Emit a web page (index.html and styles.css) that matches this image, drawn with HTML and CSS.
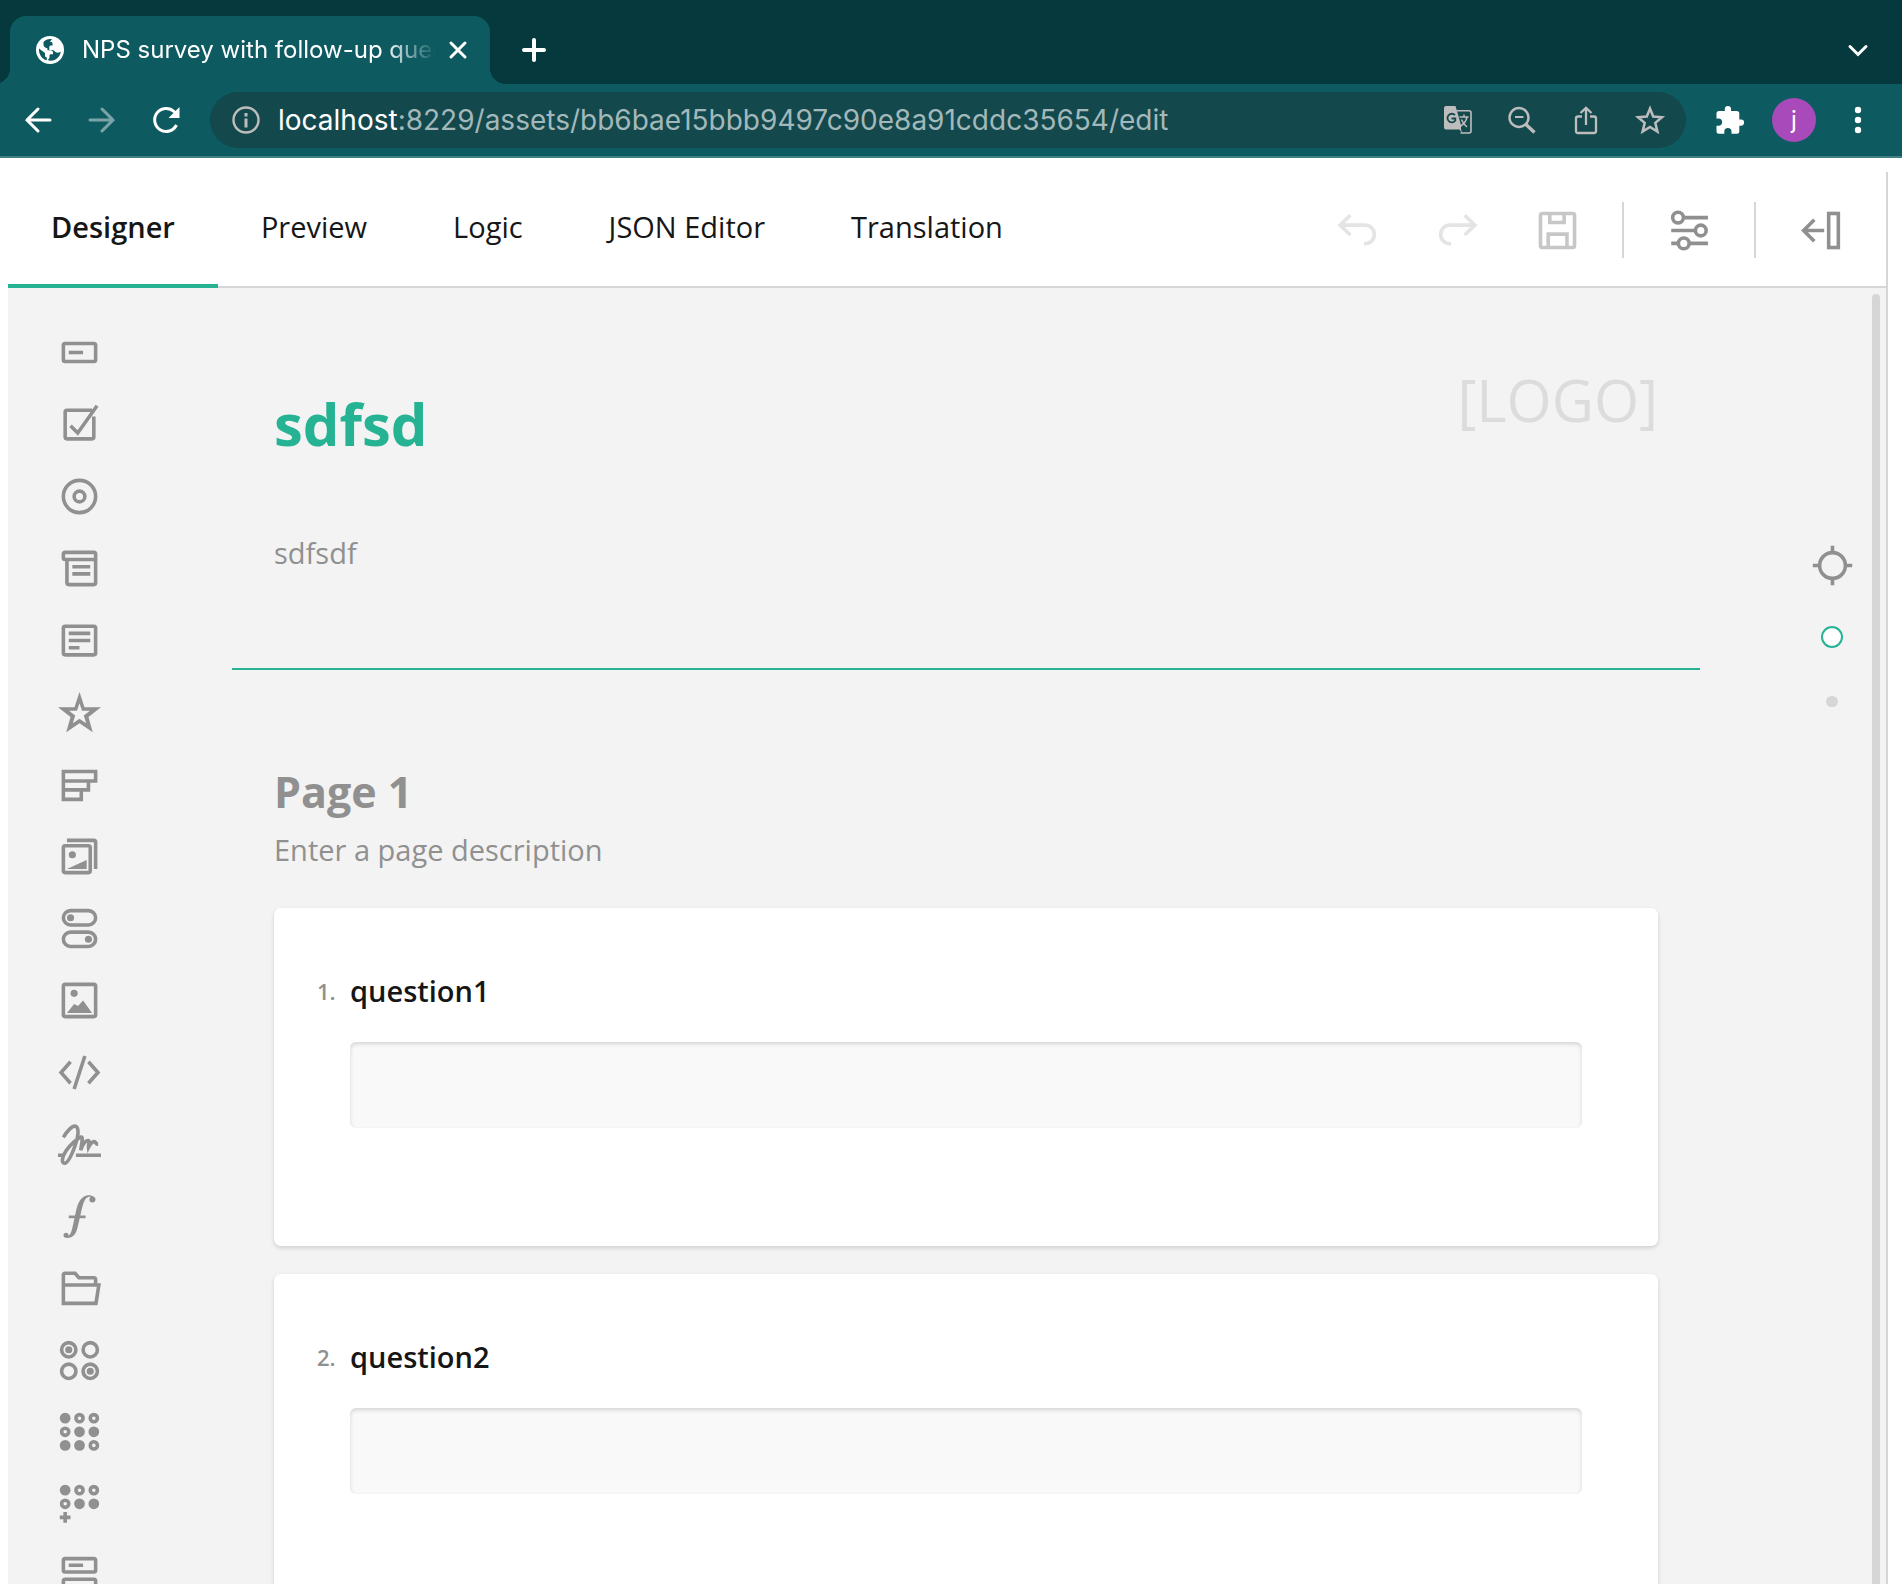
FILE: index.html
```html
<!DOCTYPE html>
<html lang="en">
<head>
<meta charset="utf-8">
<title>NPS survey with follow-up questions</title>
<link rel="stylesheet" href="styles.css">
</head>
<body>
<div class="browser">
  <div class="tab-strip">
    <div class="browser-tab">
      <svg class="icon-28" viewBox="0 0 28 28"><circle cx="14" cy="14" r="14" fill="#fff" stroke="none"/><path fill="#0d5b61" stroke="none" d="M16 3.200c-3.500-.6-6.500.6-8.500 2.800v2.500c0 1.500.8 2.700 2.300 3.300l1.700.7v1.800h3.300c1.400 0 2.200 1 2.200 2.400v1.600h-2.200c-.9 0-1.300.6-1.300 1.400v1.600c0 1.300-1 2-2 2.700 3.500 1.400 7.500.6 10.200-2.200 1.700-1.800 2.800-3.800 3.100-6.300-1.200 1.300-3.800 1.500-5.300.5-1.200-.9-1.500-2-3.300-2h-2.900v-2.700c0-1 .8-1.700 1.800-1.700h1.500V7.800c0-1-.7-1.700-1.700-1.700h-1zM3 12.500l6 4.500v2.500c0 1.200.8 2 1.800 2v2.800C6 23.200 2.600 18.500 3 12.500z"/></svg>
      <span class="browser-tab-title">NPS survey with follow-up ques</span>
      <button class="chrome-button tab-close" aria-label="Close tab"><svg class="icon-28" viewBox="0 0 28 28"><path d="M7 7l14 14M21 7L7 21" stroke-width="3" stroke-linecap="round"/></svg></button>
    </div>
    <button class="chrome-button new-tab" aria-label="New tab"><svg class="icon-28" viewBox="0 0 28 28"><path d="M14 4v20M4 14h20" stroke-width="4" stroke-linecap="round"/></svg></button>
    <button class="chrome-button tab-search" aria-label="Search tabs"><svg class="icon-28" viewBox="0 0 28 28"><path d="M6 10.500l8 8 8-8" stroke-width="3" stroke-linecap="round"/></svg></button>
  </div>
  <div class="toolbar">
    <div class="toolbar-nav">
      <button class="chrome-button" aria-label="Back"><svg class="icon-28" viewBox="0 0 28 28"><path d="M26 14H3M14 3L3 14l11 11" stroke-width="3" stroke-linecap="round"/></svg></button>
      <button class="chrome-button is-dim" aria-label="Forward"><svg class="icon-28" viewBox="0 0 28 28"><path d="M2 14h23M14 3l11 11-11 11" stroke-width="3" stroke-linecap="round"/></svg></button>
      <button class="chrome-button" aria-label="Reload"><svg class="icon-28" viewBox="0 0 28 28"><path d="M24.500 19A11.500 11.500 0 1 1 22 5.500l2 2" stroke-width="3"/><path d="M27.500 1v11h-11z" fill="currentColor" stroke="none"/></svg></button>
    </div>
    <div class="omnibox">
      <button class="chrome-button" aria-label="View site information"><svg class="icon-28" viewBox="0 0 28 28"><circle cx="14" cy="14" r="12.500" stroke-width="2.400"/><path d="M14 12.500v9M14 7v3.500" stroke-width="3"/></svg></button>
      <div class="url" role="textbox" contenteditable="true" aria-label="Address"><span class="url-host">localhost</span>:8229/assets/bb6bae15bbb9497c90e8a91cddc35654/edit</div>
      <div class="omnibox-actions">
        <button class="chrome-button" aria-label="Translate this page"><svg class="icon-28" viewBox="0 0 28 28"><path fill="currentColor" stroke="none" d="M2 0h9.500l1.200 4L17 19v4.500l1.500 4.500-3-4.500H2a2 2 0 0 1-2-2V2a2 2 0 0 1 2-2z"/><path d="M13 4.800h12a2 2 0 0 1 2 2V25a2 2 0 0 1-2 2H16.500" stroke-width="1.600"/><path d="M15.500 11h9M20 8.500V11M23 11c-.8 4-3.500 7.500-7 9.500M17.500 13.500c1 3 3 5.500 5.500 7.500" stroke-width="1.500"/><path d="M11 9.200A4.300 4.300 0 1 0 11.300 14.500V12.500H7.500" stroke="#13484c" stroke-width="1.800"/></svg></button>
        <button class="chrome-button" aria-label="Zoom"><svg class="icon-28" viewBox="0 0 28 28"><circle cx="11" cy="11.500" r="9.500" stroke-width="2.400"/><path d="M7 11h8.500" stroke-width="2"/><path d="M18 18.500l8.500 8" stroke-width="3.400"/></svg></button>
        <button class="chrome-button" aria-label="Share this page"><svg class="icon-28" viewBox="0 0 28 28"><path d="M10 10.500H6a2 2 0 0 0-2 2V25a2 2 0 0 0 2 2h16a2 2 0 0 0 2-2V12.500a2 2 0 0 0-2-2h-4M14 19V2M8.500 7L14 1.800 19.500 7" stroke-width="2.300"/></svg></button>
        <button class="chrome-button" aria-label="Bookmark this page"><svg class="icon-28" viewBox="0 0 28 28"><path d="M14 2.500l3.200 8 8.800.7-6.700 5.700 2.100 8.700L14 21l-7.400 4.600 2.100-8.700L2 11.200l8.800-.7z" stroke-width="2.500"/></svg></button>
      </div>
    </div>
    <div class="toolbar-end">
      <button class="chrome-button" aria-label="Extensions"><svg class="icon-28" viewBox="0 0 28 28"><path fill="currentColor" stroke="none" d="M25 13.500h-1.700V7.500A2.500 2.500 0 0 0 20.800 5H15V3a3 3 0 0 0-6.200 0v2H3A2.500 2.500 0 0 0 .5 7.500v5h2a3.600 3.600 0 0 1 0 7.200h-2v5.500A2.500 2.500 0 0 0 3 27.700h5.300v-2a3.600 3.600 0 0 1 7.200 0v2h5.300a2.500 2.500 0 0 0 2.500-2.500v-5.500H25a3.100 3.100 0 0 0 0-6.200z"/></svg></button>
      <button class="avatar" aria-label="Profile">j</button>
      <button class="chrome-button" aria-label="Menu"><svg class="icon-28" viewBox="0 0 28 28"><g fill="currentColor" stroke="none"><circle cx="14" cy="4" r="3.200"/><circle cx="14" cy="14" r="3.200"/><circle cx="14" cy="24" r="3.200"/></g></svg></button>
    </div>
  </div>
</div>

<div class="creator">
  <header class="creator-header">
    <nav class="creator-tabs">
      <a class="creator-tab is-active" href="#designer">Designer</a>
      <a class="creator-tab" href="#preview">Preview</a>
      <a class="creator-tab" href="#logic">Logic</a>
      <a class="creator-tab" href="#json">JSON Editor</a>
      <a class="creator-tab" href="#translation">Translation</a>
    </nav>
    <div class="creator-actions">
      <button class="action is-disabled" aria-label="Undo"><svg class="icon" viewBox="0 0 24 24"><path d="M2 9h14.200a5.200 5.200 0 0 1 0 10.400h-.6M8 3.500L2.300 9 8 14.500"/></svg></button>
      <button class="action is-disabled" aria-label="Redo"><svg class="icon" viewBox="0 0 24 24"><path d="M22 9H7.800a5.200 5.200 0 0 0 0 10.400h.6M16 3.500L21.700 9 16 14.500"/></svg></button>
      <button class="action is-saved" aria-label="Save"><svg class="icon" viewBox="0 0 24 24"><rect x="2.500" y="2.500" width="19" height="19" rx="1"/><path d="M7.700 2.500V7.500h8V2.500M6.800 21.500V14h10.500v7.500"/></svg></button>
      <span class="divider"></span>
      <button class="action" aria-label="Settings"><svg class="icon" viewBox="0 0 24 24"><circle cx="5.600" cy="4.800" r="3"/><circle cx="18.300" cy="12" r="3"/><circle cx="8.800" cy="19.200" r="3"/><path d="M8.600 4.800h13.700M1.800 12h13.500M1.800 19.200h4M11.800 19.200h10.500"/></svg></button>
      <span class="divider"></span>
      <button class="action" aria-label="Show panel"><svg class="icon" viewBox="0 0 24 24"><path d="M13.500 12H2.500M8 6l-6 6 6 6"/><rect x="16" y="2.500" width="5.400" height="19"/></svg></button>
    </div>
  </header>

  <div class="workspace">
    <aside class="toolbox">
      <button class="tool" aria-label="Single Input"><svg class="icon" viewBox="0 0 24 24"><rect x="3" y="7" width="18" height="10" rx="1"/><path d="M6 12h8"/></svg></button>
      <button class="tool" aria-label="Checkbox"><svg class="icon" viewBox="0 0 24 24"><path d="M19 4H5a1 1 0 0 0-1 1v14a1 1 0 0 0 1 1h14a1 1 0 0 0 1-1V7.500M7 12.700l4 4L21.800 1.500"/></svg></button>
      <button class="tool" aria-label="Radiogroup"><svg class="icon" viewBox="0 0 24 24"><circle cx="12" cy="12" r="9"/><circle cx="12" cy="12" r="3"/></svg></button>
      <button class="tool" aria-label="Dropdown"><svg class="icon" viewBox="0 0 24 24"><path d="M5 7H4a1 1 0 0 1-1-1V4a1 1 0 0 1 1-1h16a1 1 0 0 1 1 1v3zM5 7v13a1 1 0 0 0 1 1h14a1 1 0 0 0 1-1V7M8 11h10M8 15h10"/></svg></button>
      <button class="tool" aria-label="Comment"><svg class="icon" viewBox="0 0 24 24"><rect x="3" y="4" width="18" height="16" rx="1"/><path d="M6 8h12M6 12h12M6 16h6"/></svg></button>
      <button class="tool" aria-label="Rating"><svg class="icon" viewBox="0 0 24 24"><path class="solid" fill-rule="evenodd" d="M12 .5l2.800 8.500H24l-7 5.500L19.400 23 12 18l-7.400 5L7 14.500 0 9h9.200zM12 6.800L10.600 11H6.200l3.400 2.700L8.300 18l3.700-2.500 3.700 2.500-1.300-4.300 3.400-2.700h-4.400z"/></svg></button>
      <button class="tool" aria-label="Ranking"><svg class="icon" viewBox="0 0 24 24"><path d="M3 4.700h18V10H3zM17 10v5H3v-5M13 15v5.300H3V15"/></svg></button>
      <button class="tool" aria-label="Image Picker"><svg class="icon" viewBox="0 0 24 24"><rect x="3" y="6" width="15" height="15" rx="1"/><path d="M5 3h15a1 1 0 0 1 1 1v15"/><circle class="solid" cx="8" cy="11" r="2"/><path class="solid" d="M5 19l11-5v5z"/></svg></button>
      <button class="tool" aria-label="Boolean"><svg class="icon" viewBox="0 0 24 24"><rect x="3" y="2" width="18" height="8" rx="4"/><rect x="3" y="14" width="18" height="8" rx="4"/><circle class="solid" cx="7" cy="6" r="2"/><circle class="solid" cx="17" cy="18" r="2"/></svg></button>
      <button class="tool" aria-label="Image"><svg class="icon" viewBox="0 0 24 24"><rect x="3" y="3" width="18" height="18" rx="1"/><circle class="solid" cx="9" cy="8" r="2"/><path class="solid" d="M5 19l4-5 2.200 1L14 12l5 7z"/></svg></button>
      <button class="tool" aria-label="HTML"><svg class="icon" viewBox="0 0 24 24"><path d="M7 6l-5.300 6L7 18M17 6l5.300 6-5.300 6M15 2.800L9 21.200"/></svg></button>
      <button class="tool" aria-label="Signature"><svg class="icon" viewBox="0 0 24 24"><path d="M0 18h3.500M10 18h14"/><path stroke-width="2" d="M3 8C5 4.500 8 1.300 9.800 1.800c2.200.7 1.500 6.200-.3 11-1.700 4.700-4 9.600-5.800 9.700-2.200 0-1.200-4 .8-7C7 11.800 11 8.500 12.800 7.800c1.500-.3.300 3.800-.1 7.400C13.500 12 15.500 9.500 17 9.800c1 .3-.2 2.400 0 3.800 1.200-2.300 2.600-3.600 3.400-3.200.8.500.8 1.500 2 1.500"/></svg></button>
      <button class="tool" aria-label="Expression"><svg class="icon" viewBox="0 0 24 24"><path stroke-width="1.500" d="M6 12.200h9.400"/><circle class="solid" cx="19.200" cy="2.500" r="1.700"/><circle class="solid" cx="4.500" cy="22.500" r="1.400"/><path class="solid" d="M20 1C18.500-.2 16-.3 14 1.200c-2 1.500-3.200 4-4 8L8.300 17c-.7 3.500-1.500 5.600-3 6l-.8.900c2.700.3 5-.8 6.200-4.900l2-8.500c1-4.500 1.800-8.500 4-9.300 1-.4 1.800-.2 2.300 0z"/></svg></button>
      <button class="tool" aria-label="Panel"><svg class="icon" viewBox="0 0 24 24"><path d="M3 10h19.800l-1.600 10.300H3V4.500a1 1 0 0 1 1-1h5.500l2.200 2.500H20a1 1 0 0 1 1 1v3"/></svg></button>
      <button class="tool" aria-label="Matrix single choice"><svg class="icon" viewBox="0 0 24 24"><circle cx="6" cy="6" r="4"/><circle cx="18" cy="6" r="4"/><circle cx="6" cy="18" r="4"/><circle cx="18" cy="18" r="4"/><circle class="solid" cx="6" cy="6" r="2"/><circle class="solid" cx="18" cy="18" r="2"/></svg></button>
      <button class="tool" aria-label="Matrix multiple choice"><svg class="icon" viewBox="0 0 24 24"><g class="solid"><circle cx="4" cy="4" r="3"/><circle cx="12" cy="11.600" r="3"/><circle cx="20" cy="11.600" r="3"/><circle cx="4" cy="19.200" r="3"/><circle cx="12" cy="19.200" r="3"/></g><circle cx="12" cy="4" r="2"/><circle cx="20" cy="4" r="2"/><circle cx="4" cy="11.600" r="2"/><circle cx="20" cy="19.200" r="2"/></svg></button>
      <button class="tool" aria-label="Matrix dynamic rows"><svg class="icon" viewBox="0 0 24 24"><g class="solid"><circle cx="4" cy="4" r="3"/><circle cx="12" cy="11.600" r="3"/><circle cx="20" cy="11.600" r="3"/></g><circle cx="12" cy="4" r="2"/><circle cx="20" cy="4" r="2"/><circle cx="4" cy="11.600" r="2"/><path d="M1 19.200h6M4 16.200v6"/></svg></button>
      <button class="tool" aria-label="Multiple Text"><svg class="icon" viewBox="0 0 24 24"><rect x="3" y="2" width="18" height="7.500" rx="1"/><rect x="3" y="13.500" width="18" height="7.500" rx="1"/><path d="M6 5.700h8M6 17.200h8"/></svg></button>
    </aside>

    <main class="surface">
      <section class="survey-header">
        <div>
          <h1 class="survey-title">sdfsd</h1>
          <p class="description">sdfsdf</p>
        </div>
        <div class="logo-placeholder">[LOGO]</div>
      </section>
      <section class="page">
        <h2 class="page-title">Page 1</h2>
        <p class="description">Enter a page description</p>
        <div class="questions">
          <article class="question">
            <span class="question-number">1.</span>
            <label class="question-title" for="question1">question1</label>
            <input class="question-input" id="question1" type="text">
          </article>
          <article class="question">
            <span class="question-number">2.</span>
            <label class="question-title" for="question2">question2</label>
            <input class="question-input" id="question2" type="text">
          </article>
        </div>
      </section>
    </main>

    <nav class="page-navigator">
      <button class="tool" aria-label="Scroll to page"><svg class="icon" viewBox="0 0 24 24"><circle cx="12" cy="12" r="7.200"/><path d="M12 1v4M12 19v4M1 12h4M19 12h4"/></svg></button>
      <a class="page-dot is-current" href="#page1" aria-label="Page 1"></a>
      <a class="page-dot" href="#page2" aria-label="Page 2"></a>
    </nav>
    <div class="scroll-thumb"></div>
  </div>
</div>
</body>
</html>
```
FILE: styles.css
```css
* {
  box-sizing: border-box;
}

body {
  display: flex;
  flex-direction: column;
  height: 100vh;
  margin: 0;
  overflow: hidden;
  background: #fff;
  color: #161616;
  font-family: "Open Sans", sans-serif;
  font-size: 29px;
  line-height: 40px;
}

h1,
h2,
p {
  margin: 0;
}

a {
  color: inherit;
  text-decoration: none;
}

button {
  padding: 0;
  border: 0;
  background: none;
  color: inherit;
  font: inherit;
}

svg {
  display: block;
  flex: none;
  fill: none;
  stroke: currentColor;
}

.solid {
  fill: currentColor;
  stroke: none;
}

.icon {
  width: 43px;
  height: 43px;
  overflow: visible;
  stroke-width: 2;
}

.icon-28 {
  width: 28px;
  height: 28px;
  overflow: visible;
}

/* Browser chrome */

.browser {
  flex: none;
  overflow: hidden;
  border-bottom: 2px solid #3f8084;
  background: #0d5b61;
  color: #fff;
  font-family: Inter, sans-serif;
}

.tab-strip {
  display: flex;
  align-items: center;
  height: 84px;
  padding: 16px 30px 0 10px;
  background: #06393d;
}

.browser-tab {
  position: relative;
  display: flex;
  align-items: center;
  width: 480px;
  height: 68px;
  padding: 0 18px 0 26px;
  border-radius: 16px 16px 0 0;
  background: #0d5b61;
  font-size: 24px;
}

.browser-tab::before,
.browser-tab::after {
  position: absolute;
  bottom: 0;
  width: 16px;
  height: 16px;
  content: "";
}

.browser-tab::before {
  right: 100%;
  background: radial-gradient(circle at 0 0, #06393d 16px, #0d5b61 16px);
}

.browser-tab::after {
  left: 100%;
  background: radial-gradient(circle at 100% 0, #06393d 16px, #0d5b61 16px);
}

.browser-tab-title {
  flex: 1;
  min-width: 0;
  margin-left: 18px;
  white-space: nowrap;
  mask-image: linear-gradient(to left, transparent 4px, #000 56px);
}

.tab-close {
  margin-left: 4px;
}

.new-tab {
  margin-left: 30px;
}

.tab-search {
  margin-left: auto;
}

.toolbar {
  display: flex;
  align-items: center;
  gap: 30px;
  height: 72px;
  padding: 0 30px 0 24px;
}

.toolbar-nav {
  display: flex;
  gap: 36px;
}

.is-dim {
  opacity: 0.45;
}

.omnibox {
  display: flex;
  flex: 1;
  align-items: center;
  height: 56px;
  padding: 0 22px;
  border-radius: 28px;
  background: #13484c;
  color: #bdbdbd;
}

.url {
  flex: 1;
  margin-left: 18px;
  overflow: hidden;
  color: #a3b8ba;
  font-size: 28px;
  white-space: nowrap;
}

.url-host {
  color: #fff;
}

.omnibox-actions {
  display: flex;
  gap: 36px;
}

.toolbar-end {
  display: flex;
  align-items: center;
  gap: 28px;
}

.avatar {
  width: 44px;
  height: 44px;
  border-radius: 50%;
  background: #a94abb;
  font-size: 24px;
}

/* Survey creator */

.creator {
  display: flex;
  flex: 1;
  flex-direction: column;
  min-height: 0;
  margin: 14px 14px 0 8px;
  border-right: 2px solid #d6d6d6;
}

.creator-header {
  display: flex;
  flex: none;
  justify-content: space-between;
  height: 116px;
  border-bottom: 2px solid #d6d6d6;
}

.creator-tabs {
  display: flex;
}

.creator-tab {
  height: 116px;
  padding: 35px 43px 0;
}

.creator-tab.is-active {
  border-bottom: 4px solid #25b393;
  font-weight: 600;
}

.creator-actions {
  display: flex;
  align-items: center;
  padding: 2px 15px 0 0;
  color: #909090;
}

.action {
  display: grid;
  place-items: center;
  width: 100px;
  height: 72px;
}

.action.is-disabled {
  color: #e4e4e4;
}

.action.is-saved {
  color: #c7c7c7;
}

.divider {
  width: 2px;
  height: 56px;
  margin: 0 15px;
  background: #d6d6d6;
}

.workspace {
  display: flex;
  flex: 1;
  min-height: 0;
  overflow: hidden;
  background: #f3f3f3;
}

.toolbox {
  display: flex;
  flex: none;
  flex-direction: column;
  gap: 29px;
  width: 144px;
  padding: 43px 0 0 50px;
  color: #909090;
}

.tool {
  width: 43px;
  height: 43px;
}

.surface {
  flex: 1;
  padding: 0 80px;
}

.survey-header {
  display: flex;
  justify-content: space-between;
  padding: 72px 42px 95px;
  border-bottom: 2px solid #25b393;
}

.survey-title {
  margin: 24px 0 69px;
  color: #25b393;
  font-size: 58px;
  font-weight: 700;
  line-height: 80px;
}

.description {
  color: #909090;
}

.logo-placeholder {
  color: #dcdcdc;
  font-size: 58px;
  line-height: 80px;
}

.page {
  padding: 92px 42px 0;
}

.page-title {
  margin-bottom: 8px;
  color: #909090;
  font-size: 43px;
  font-weight: 700;
  line-height: 60px;
}

.questions {
  display: grid;
  gap: 28px;
  margin-top: 38px;
}

.question {
  display: grid;
  grid-template-columns: 33px 1fr;
  row-gap: 31px;
  align-items: center;
  padding: 63px 76px 118px 43px;
  border-radius: 7px;
  background: #fff;
  box-shadow: 0 2px 4px rgba(0, 0, 0, 0.15);
}

.question-number {
  color: #909090;
  font-size: 22px;
  font-weight: 600;
}

.question-title {
  font-weight: 600;
}

.question-input {
  grid-column: 2;
  width: 100%;
  height: 86px;
  padding: 0 28px;
  border: 0;
  border-radius: 6px;
  background: #f9f9f9;
  box-shadow: inset 0 2px 4px rgba(0, 0, 0, 0.15);
  font: inherit;
}

.page-navigator {
  display: flex;
  flex: none;
  flex-direction: column;
  align-items: center;
  width: 92px;
  padding: 256px 0 0 12px;
  color: #909090;
}

.page-dot {
  width: 12px;
  height: 11px;
  margin-top: 48px;
  border-radius: 6px;
  background: #d6d6d6;
}

.page-dot.is-current {
  width: 22px;
  height: 22px;
  margin-top: 39px;
  border: 2px solid #25b393;
  border-radius: 50%;
  background: #fff;
}

.scroll-thumb {
  flex: none;
  width: 8px;
  margin: 6px 6px 0 0;
  border-radius: 4px 4px 0 0;
  background: #d6d6d6;
}
```
